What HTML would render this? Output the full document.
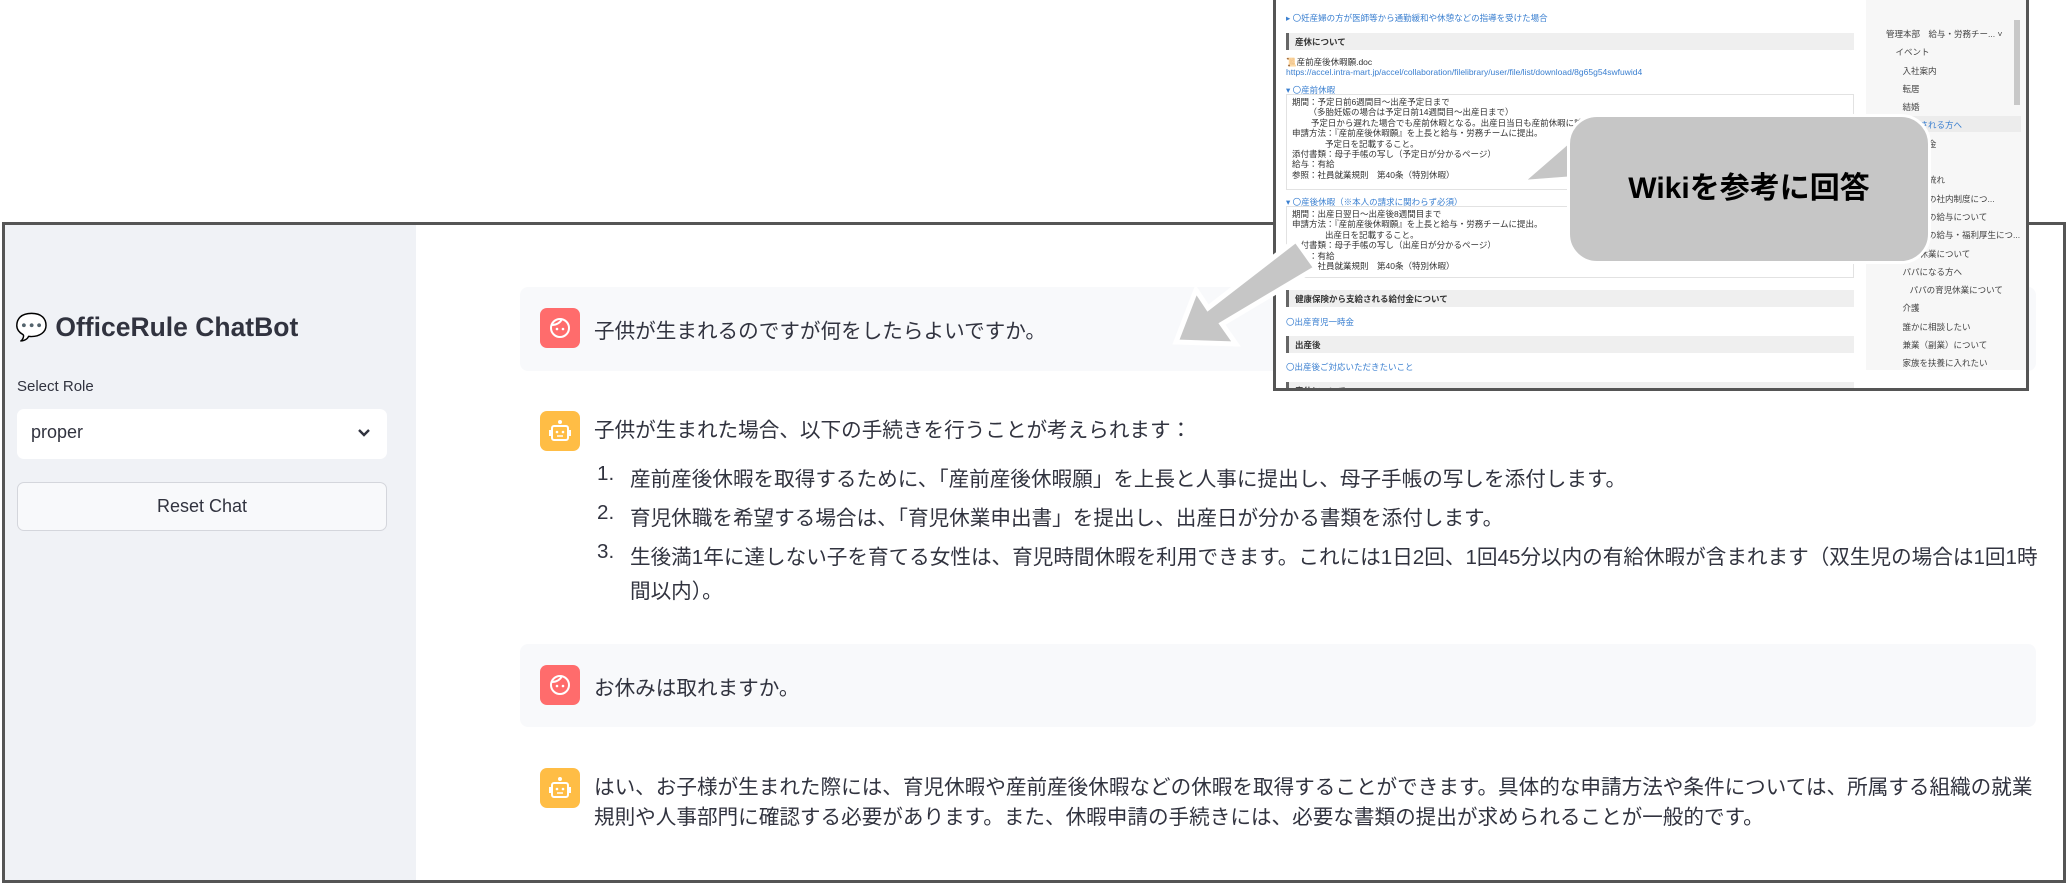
<!DOCTYPE html>
<html><head><meta charset="utf-8"><style>
*{margin:0;padding:0;box-sizing:border-box}
body{width:2068px;height:886px;background:#fff;position:relative;overflow:hidden;font-family:"Liberation Sans","Noto Sans CJK JP",sans-serif;color:#31333f}
.abs{position:absolute}
#frame{left:2px;top:222px;width:2064px;height:661px;border:3px solid #555;background:#fff}
#side{left:0;top:0;width:411px;height:100%;background:#f0f2f6}
.box{border-radius:8px;background:#f8f9fb}
.av{width:40px;height:40px;border-radius:7px}
.t{font-size:20.6px;color:#31333f;white-space:nowrap}
#ov{left:1273px;top:-3px;width:756px;height:394px;border:3px solid #555;background:#fff;overflow:hidden;font-size:8.5px;color:#333}
#ov div{position:absolute;white-space:nowrap}
.lk{color:#3a7fd0}
.hd{left:10px;width:568px;height:17px;background:#efefef;border-left:3px solid #666;font-weight:bold;padding:3px 6px}
.bx{left:10px;width:568px;border:1px solid #e2e2e2;background:#fff}
.nv{color:#444}
</style></head><body>
<div id="frame" class="abs">
 <div id="side" class="abs">
  <div class="abs" style="left:10px;top:87px;font-size:26.5px;font-weight:bold;color:#31333f;white-space:nowrap">💬 OfficeRule ChatBot</div>
  <div class="abs" style="left:12px;top:153px;font-size:15px">Select Role</div>
  <div class="abs" style="left:12px;top:184px;width:370px;height:50px;background:#fff;border-radius:7px;font-size:18px;padding:13px 14px">proper
   <svg class="abs" style="right:16px;top:19px" width="14" height="10" viewBox="0 0 14 10"><path d="M2 2l5 5 5-5" stroke="#31333f" stroke-width="2.4" fill="none"/></svg></div>
  <div class="abs" style="left:12px;top:257px;width:370px;height:49px;background:#f8f9fb;border:1px solid #d4d6dc;border-radius:7px;font-size:18px;text-align:center;line-height:47px">Reset Chat</div>
 </div>
 <div class="abs box" style="left:515px;top:62px;width:1516px;height:84px"></div>
 <div class="abs av" style="left:535px;top:83px;background:#ff6c6c"><svg width="40" height="40" viewBox="0 0 40 40"><circle cx="20" cy="20" r="9" stroke="#fff" stroke-width="2" fill="none"/><path d="M12 17c4 0 8-2 10-6" stroke="#fff" stroke-width="2" fill="none"/><circle cx="17" cy="21" r="1.3" fill="#fff"/><circle cx="23" cy="21" r="1.3" fill="#fff"/></svg></div>
 <div class="abs t" style="left:589px;top:89px">子供が生まれるのですが何をしたらよいですか。</div>
 <div class="abs av" style="left:535px;top:186px;background:#ffbd45"><svg width="40" height="40" viewBox="0 0 40 40"><rect x="12" y="15" width="16" height="14" rx="2" stroke="#fff" stroke-width="2" fill="none"/><circle cx="20" cy="11" r="2" fill="#fff"/><rect x="9" y="19" width="3" height="6" fill="#fff"/><rect x="28" y="19" width="3" height="6" fill="#fff"/><circle cx="17" cy="21" r="1.3" fill="#fff"/><circle cx="23" cy="21" r="1.3" fill="#fff"/><path d="M17 25h6" stroke="#fff" stroke-width="1.5"/></svg></div>
 <div class="abs t" style="left:589px;top:188px">子供が生まれた場合、以下の手続きを行うことが考えられます：</div>
 <div class="abs t" style="left:592px;top:237px">1.</div><div class="abs t" style="left:625px;top:237px">産前産後休暇を取得するために、「産前産後休暇願」を上長と人事に提出し、母子手帳の写しを添付します。</div>
 <div class="abs t" style="left:592px;top:276px">2.</div><div class="abs t" style="left:625px;top:276px">育児休職を希望する場合は、「育児休業申出書」を提出し、出産日が分かる書類を添付します。</div>
 <div class="abs t" style="left:592px;top:315px">3.</div><div class="abs t" style="left:625px;top:315px">生後満1年に達しない子を育てる女性は、育児時間休暇を利用できます。これには1日2回、1回45分以内の有給休暇が含まれます（双生児の場合は1回1時</div>
 <div class="abs t" style="left:625px;top:349px">間以内）。</div>
 <div class="abs box" style="left:515px;top:419px;width:1516px;height:83px"></div>
 <div class="abs av" style="left:535px;top:440px;background:#ff6c6c"><svg width="40" height="40" viewBox="0 0 40 40"><circle cx="20" cy="20" r="9" stroke="#fff" stroke-width="2" fill="none"/><path d="M12 17c4 0 8-2 10-6" stroke="#fff" stroke-width="2" fill="none"/><circle cx="17" cy="21" r="1.3" fill="#fff"/><circle cx="23" cy="21" r="1.3" fill="#fff"/></svg></div>
 <div class="abs t" style="left:589px;top:446px">お休みは取れますか。</div>
 <div class="abs av" style="left:535px;top:543px;background:#ffbd45"><svg width="40" height="40" viewBox="0 0 40 40"><rect x="12" y="15" width="16" height="14" rx="2" stroke="#fff" stroke-width="2" fill="none"/><circle cx="20" cy="11" r="2" fill="#fff"/><rect x="9" y="19" width="3" height="6" fill="#fff"/><rect x="28" y="19" width="3" height="6" fill="#fff"/><circle cx="17" cy="21" r="1.3" fill="#fff"/><circle cx="23" cy="21" r="1.3" fill="#fff"/><path d="M17 25h6" stroke="#fff" stroke-width="1.5"/></svg></div>
 <div class="abs t" style="left:589px;top:545px">はい、お子様が生まれた際には、育児休暇や産前産後休暇などの休暇を取得することができます。具体的な申請方法や条件については、所属する組織の就業</div>
 <div class="abs t" style="left:589px;top:575px">規則や人事部門に確認する必要があります。また、休暇申請の手続きには、必要な書類の提出が求められることが一般的です。</div>
</div>

<div id="ov" class="abs">
 <div class="lk" style="left:10px;top:12px">▸ 〇妊産婦の方が医師等から通勤緩和や休憩などの指導を受けた場合</div>
 <div class="hd" style="top:33px">産休について</div>
 <div style="left:10px;top:56px">📜産前産後休暇願.doc</div>
 <div class="lk" style="left:10px;top:67px">https://accel.intra-mart.jp/accel/collaboration/filelibrary/user/file/list/download/8g65g54swfuwid4</div>
 <div class="lk" style="left:10px;top:84px">▾ 〇産前休暇</div>
 <div class="bx" style="top:94px;height:96px"></div>
 <div style="left:16px;top:97px;line-height:10.4px">期間：予定日前6週間目～出産予定日まで<br>&nbsp;&nbsp;&nbsp;&nbsp;&nbsp;&nbsp;&nbsp;（多胎妊娠の場合は予定日前14週間目～出産日まで）<br>&nbsp;&nbsp;&nbsp;&nbsp;&nbsp;&nbsp;&nbsp;&nbsp;予定日から遅れた場合でも産前休暇となる。出産日当日も産前休暇に該当す<br>申請方法：『産前産後休暇願』を上長と給与・労務チームに提出。<br>&nbsp;&nbsp;&nbsp;&nbsp;&nbsp;&nbsp;&nbsp;&nbsp;&nbsp;&nbsp;&nbsp;&nbsp;&nbsp;&nbsp;予定日を記載すること。<br>添付書類：母子手帳の写し（予定日が分かるページ）<br>給与：有給<br>参照：社員就業規則　第40条（特別休暇）</div>
 <div class="lk" style="left:10px;top:196px">▾ 〇産後休暇（※本人の請求に関わらず必須）</div>
 <div class="bx" style="top:206px;height:72px"></div>
 <div style="left:16px;top:209px;line-height:10.4px">期間：出産日翌日～出産後8週間目まで<br>申請方法：『産前産後休暇願』を上長と給与・労務チームに提出。<br>&nbsp;&nbsp;&nbsp;&nbsp;&nbsp;&nbsp;&nbsp;&nbsp;&nbsp;&nbsp;&nbsp;&nbsp;&nbsp;&nbsp;出産日を記載すること。<br>添付書類：母子手帳の写し（出産日が分かるページ）<br>給与：有給<br>参照：社員就業規則　第40条（特別休暇）</div>
 <div class="hd" style="top:290px">健康保険から支給される給付金について</div>
 <div class="lk" style="left:10px;top:316px">〇出産育児一時金</div>
 <div class="hd" style="top:336px">出産後</div>
 <div class="lk" style="left:10px;top:361px">〇出産後ご対応いただきたいこと</div>
 <div class="hd" style="top:382px">産休について</div>
 <div style="left:590px;top:0;width:165px;height:370px;background:#f7f7f7"></div>
 <div style="left:738px;top:20px;width:6px;height:85px;background:#c8c8c8"></div>
 <div style="left:610px;top:116px;width:135px;height:16px;background:#ececec"></div>
 <div class="nv" style="left:610px;top:25px;line-height:18.3px">管理本部　給与・労務チー... ˅<br>&nbsp;&nbsp;&nbsp;&nbsp;イベント<br>&nbsp;&nbsp;&nbsp;&nbsp;&nbsp;&nbsp;&nbsp;入社案内<br>&nbsp;&nbsp;&nbsp;&nbsp;&nbsp;&nbsp;&nbsp;転居<br>&nbsp;&nbsp;&nbsp;&nbsp;&nbsp;&nbsp;&nbsp;結婚<br><span class="lk">&nbsp;&nbsp;&nbsp;&nbsp;&nbsp;&nbsp;&nbsp;出産される方へ</span><br>&nbsp;&nbsp;&nbsp;&nbsp;&nbsp;&nbsp;&nbsp;出産祝金<br><br>&nbsp;&nbsp;&nbsp;&nbsp;&nbsp;&nbsp;&nbsp;産休の流れ<br>&nbsp;&nbsp;&nbsp;&nbsp;&nbsp;&nbsp;&nbsp;産休中の社内制度につ...<br>&nbsp;&nbsp;&nbsp;&nbsp;&nbsp;&nbsp;&nbsp;産休中の給与について<br>&nbsp;&nbsp;&nbsp;&nbsp;&nbsp;&nbsp;&nbsp;産休中の給与・福利厚生につ...<br>&nbsp;&nbsp;&nbsp;&nbsp;&nbsp;&nbsp;&nbsp;育児休業について<br>&nbsp;&nbsp;&nbsp;&nbsp;&nbsp;&nbsp;&nbsp;パパになる方へ<br>&nbsp;&nbsp;&nbsp;&nbsp;&nbsp;&nbsp;&nbsp;&nbsp;&nbsp;&nbsp;パパの育児休業について<br>&nbsp;&nbsp;&nbsp;&nbsp;&nbsp;&nbsp;&nbsp;介護<br>&nbsp;&nbsp;&nbsp;&nbsp;&nbsp;&nbsp;&nbsp;誰かに相談したい<br>&nbsp;&nbsp;&nbsp;&nbsp;&nbsp;&nbsp;&nbsp;兼業（副業）について<br>&nbsp;&nbsp;&nbsp;&nbsp;&nbsp;&nbsp;&nbsp;家族を扶養に入れたい</div>
</div>

<svg class="abs" style="left:0;top:0" width="2068" height="886">
 <polygon points="1522,182 1575,136 1575,178" fill="#c6c6c6" stroke="#fff" stroke-width="4"/>
 <polygon points="1296,240 1316,268 1222,324 1236,344 1176,342 1196,290 1208,308" fill="#c6c6c6" stroke="#fff" stroke-width="5" stroke-linejoin="miter"/>
</svg>
<div class="abs" style="left:1567px;top:114px;width:364px;height:150px;background:#c6c6c6;border:3px solid #fff;border-radius:30px;font-size:30px;font-weight:bold;color:#000;text-align:center;line-height:144px;white-space:nowrap">Wikiを参考に回答</div>
</body></html>
